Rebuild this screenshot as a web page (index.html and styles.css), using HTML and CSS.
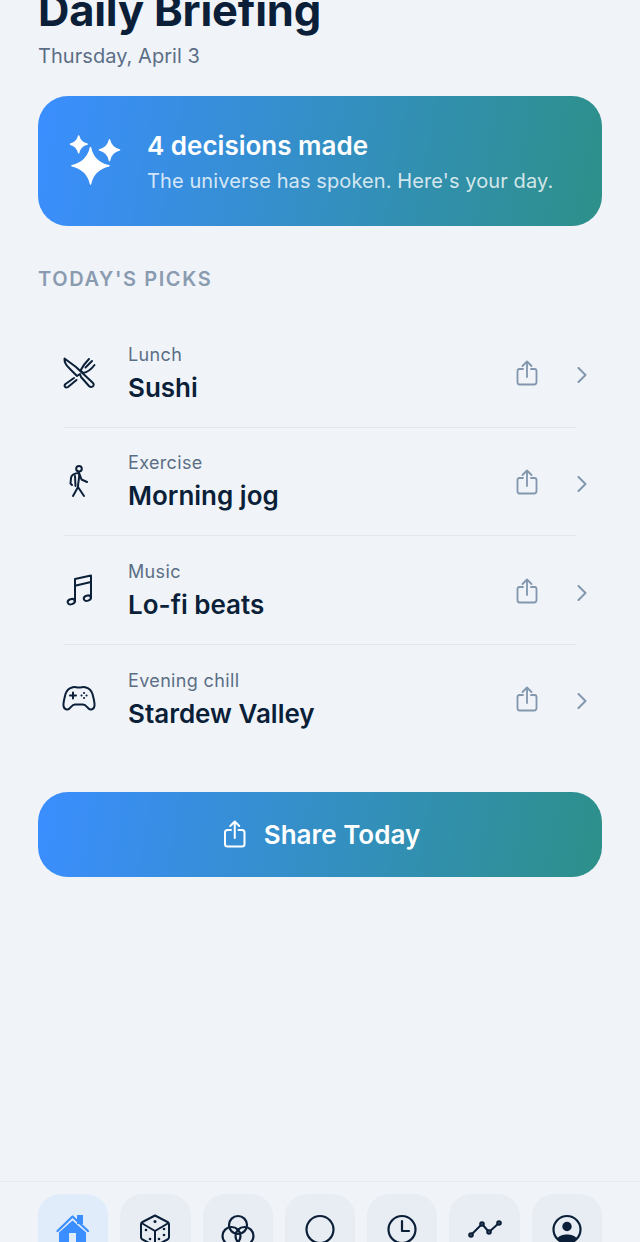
FILE: index.html
```html
<!DOCTYPE html>
<html lang="en">

<head>
    <meta charset="UTF-8">
    <meta name="viewport" content="width=device-width, initial-scale=1.0">
    <title>Daily Briefing</title>
    <link rel="stylesheet" href="styles.css">
</head>

<body>
    <div class="screen">
        <main class="content">
            <h1 class="title">Daily Briefing</h1>
            <p class="date">Thursday, April 3</p>

            <section class="hero">
                <svg class="hero-icon" viewBox="0 0 54 54" fill="#fff" stroke="#fff" stroke-width="1.500" stroke-linejoin="round">
                    <path d="M21.300 13 C23.500 24 30 29.500 40.500 32 C30 34.500 23.500 40 21.300 51 C19 40 12.500 34.500 2 32 C12.500 29.500 19 24 21.300 13 Z"/>
                    <path d="M9 1 C10 5 13 8.500 18 9.500 C13 10.500 10 14 9 18.500 C8 14 5 10.500 0 9.500 C5 8.500 8 5 9 1 Z"/>
                    <path d="M41 5 C42 10 46 14 51.500 15.500 C46 17 42 21 41 26.500 C40 21 36 17 30.500 15.500 C36 14 40 10 41 5 Z"/>
                </svg>
                <div class="hero-text">
                    <div class="hero-title">4 decisions made</div>
                    <div class="hero-sub">The universe has spoken. Here's your day.</div>
                </div>
            </section>

            <h2 class="section-label">TODAY'S PICKS</h2>

            <div class="picks">
                <div class="pick">
                    <svg class="pick-icon" viewBox="0 0 34 34" fill="none" stroke="#0b1f38" stroke-width="2" stroke-linecap="round" stroke-linejoin="round">
                        <path d="M2.500 2.500 C2 7 5 10 9 14 L15 20 L18 18 L19 21 L27 30 C28.500 31.500 31 31 31.500 29.500 C32 28.500 31.500 27.500 31 27 L14 11 Z"/>
                        <path d="M12 22 L3.500 28 C1.500 30 3.500 32.500 6 31 L14.500 24"/>
                        <path d="M21 17 L18.500 14.500 C20 11.500 22 8 27 3 M21 17 C24 16.500 28 15 32.500 9 M23.500 11.500 L30 5"/>
                    </svg>
                    <div class="pick-text">
                        <div class="pick-cat">Lunch</div>
                        <div class="pick-name">Sushi</div>
                    </div>
                    <svg class="share-icon" viewBox="0 0 22 26" fill="none" stroke="#8296ad" stroke-width="1.800" stroke-linecap="round" stroke-linejoin="round">
                        <path d="M7 9 H3.500 C2 9 1.500 10 1.500 11 V22 C1.500 23.500 2.500 24.500 3.500 24.500 H18 C19.500 24.500 20.500 23.500 20.500 22 V11 C20.500 10 19.500 9 18.500 9 H15"/>
                        <path d="M11 17 V1.500 M6.500 6 L11 1.500 L15.500 6"/>
                    </svg>
                    <svg class="chevron" viewBox="0 0 10 16" fill="none" stroke="#8296ad" stroke-width="2" stroke-linecap="round" stroke-linejoin="round"><path d="M1.500 1 L8.500 8 L1.500 15"/></svg>
                </div>
                <div class="pick">
                    <svg class="pick-icon" viewBox="0 0 34 34" fill="none" stroke="#0b1f38" stroke-width="2" stroke-linecap="round" stroke-linejoin="round">
                        <circle cx="17" cy="3.800" r="2.800"/>
                        <path d="M17 8 C13 8 9 10 9 13 L8.500 18.500 L10 20"/>
                        <path d="M17 8 C18 12 16 16 16 22 L11 31 M16 22 L22 31"/>
                        <path d="M17.500 9 L19.500 14.500 L25 17"/>
                        <path d="M13 11 L13.500 21"/>
                    </svg>
                    <div class="pick-text">
                        <div class="pick-cat">Exercise</div>
                        <div class="pick-name">Morning jog</div>
                    </div>
                    <svg class="share-icon" viewBox="0 0 22 26" fill="none" stroke="#8296ad" stroke-width="1.800" stroke-linecap="round" stroke-linejoin="round">
                        <path d="M7 9 H3.500 C2 9 1.500 10 1.500 11 V22 C1.500 23.500 2.500 24.500 3.500 24.500 H18 C19.500 24.500 20.500 23.500 20.500 22 V11 C20.500 10 19.500 9 18.500 9 H15"/>
                        <path d="M11 17 V1.500 M6.500 6 L11 1.500 L15.500 6"/>
                    </svg>
                    <svg class="chevron" viewBox="0 0 10 16" fill="none" stroke="#8296ad" stroke-width="2" stroke-linecap="round" stroke-linejoin="round"><path d="M1.500 1 L8.500 8 L1.500 15"/></svg>
                </div>
                <div class="pick">
                    <svg class="pick-icon" viewBox="0 0 34 34" fill="none" stroke="#0b1f38" stroke-width="2" stroke-linecap="round" stroke-linejoin="round">
                        <path d="M13 27.500 V5 L29 1.600 V24"/>
                        <path d="M13 11.700 L29 8"/>
                        <ellipse cx="9.200" cy="27.700" rx="3.600" ry="2.600" transform="rotate(-18 9.200 27.700)"/>
                        <ellipse cx="25.300" cy="24.200" rx="3.600" ry="2.600" transform="rotate(-18 25.300 24.200)"/>
                    </svg>
                    <div class="pick-text">
                        <div class="pick-cat">Music</div>
                        <div class="pick-name">Lo-fi beats</div>
                    </div>
                    <svg class="share-icon" viewBox="0 0 22 26" fill="none" stroke="#8296ad" stroke-width="1.800" stroke-linecap="round" stroke-linejoin="round">
                        <path d="M7 9 H3.500 C2 9 1.500 10 1.500 11 V22 C1.500 23.500 2.500 24.500 3.500 24.500 H18 C19.500 24.500 20.500 23.500 20.500 22 V11 C20.500 10 19.500 9 18.500 9 H15"/>
                        <path d="M11 17 V1.500 M6.500 6 L11 1.500 L15.500 6"/>
                    </svg>
                    <svg class="chevron" viewBox="0 0 10 16" fill="none" stroke="#8296ad" stroke-width="2" stroke-linecap="round" stroke-linejoin="round"><path d="M1.500 1 L8.500 8 L1.500 15"/></svg>
                </div>
                <div class="pick">
                    <svg class="pick-icon" viewBox="0 0 34 34" fill="none" stroke="#0b1f38" stroke-width="2" stroke-linecap="round" stroke-linejoin="round">
                        <path d="M10 5.500 C12 4.500 14 5.500 17 5.500 C20 5.500 22 4.500 24 5.500 C27.500 6.500 29.500 9 30.500 12 C31.500 16 33 21 32.500 24 C32 27.500 28.500 28.500 26.500 26.500 C24.500 24.500 23.500 22.500 21 22.500 H13 C10.500 22.500 9.500 24.500 7.500 26.500 C5.500 28.500 2 27.500 1.500 24 C1 21 2.500 16 3.500 12 C4.500 9 6.500 6.500 10 5.500 Z"/>
                        <path d="M11 10.500 V16.500 M8 13.500 H14"/>
                        <path d="M22 11 H22.100 M22 16 H22.100 M19.500 13.500 H19.600 M24.500 13.500 H24.600"/>
                    </svg>
                    <div class="pick-text">
                        <div class="pick-cat">Evening chill</div>
                        <div class="pick-name">Stardew Valley</div>
                    </div>
                    <svg class="share-icon" viewBox="0 0 22 26" fill="none" stroke="#8296ad" stroke-width="1.800" stroke-linecap="round" stroke-linejoin="round">
                        <path d="M7 9 H3.500 C2 9 1.500 10 1.500 11 V22 C1.500 23.500 2.500 24.500 3.500 24.500 H18 C19.500 24.500 20.500 23.500 20.500 22 V11 C20.500 10 19.500 9 18.500 9 H15"/>
                        <path d="M11 17 V1.500 M6.500 6 L11 1.500 L15.500 6"/>
                    </svg>
                    <svg class="chevron" viewBox="0 0 10 16" fill="none" stroke="#8296ad" stroke-width="2" stroke-linecap="round" stroke-linejoin="round"><path d="M1.500 1 L8.500 8 L1.500 15"/></svg>
                </div>
            </div>

            <button class="share-btn">
                <svg class="share-btn-icon" viewBox="0 0 28 28" fill="none" stroke="#fff" stroke-width="2" stroke-linecap="round" stroke-linejoin="round">
                    <g transform="translate(3.500 0)">
                        <path d="M7.500 10 H4 C2.500 10 1.500 11 1.500 12.500 V24 C1.500 25.500 2.500 26.500 4 26.500 H18.500 C20 26.500 21 25.500 21 24 V12.500 C21 11 20 10 18.500 10 H15"/>
                        <path d="M11.250 18 V1.500 M6.750 6 L11.250 1.500 L15.750 6"/>
                    </g>
                </svg>
                Share Today
            </button>
        </main>

        <nav class="tabbar">
            <div class="tab active">
                <svg viewBox="0 0 34 34" fill="#3b8eff" stroke="none">
                    <rect x="21" y="1" width="6" height="9"/>
                    <path d="M16.500 6.500 L30 18.500 V34 H20 V19 H13 V34 H3 V18.500 Z"/>
                    <path d="M1.500 17 L16.500 2.500 L32 17" fill="none" stroke="#3b8eff" stroke-width="2.200" stroke-linecap="round" stroke-linejoin="round"/>
                </svg>
            </div>
            <div class="tab">
                <svg viewBox="0 0 34 34" fill="none" stroke="#0b1f38" stroke-width="2" stroke-linejoin="round">
                    <path d="M17 1.500 L29.500 8 C30.500 8.500 31 9.500 31 10.500 V23 C31 24 30.500 25 29.500 25.500 L17 32 L4.500 25.500 C3.500 25 3 24 3 23 V10.500 C3 9.500 3.500 8.500 4.500 8 Z"/>
                    <path d="M3.500 9 L17 17 L30.500 9 M17 17 V32"/>
                    <g fill="#0b1f38" stroke="none">
                        <circle cx="17" cy="7.500" r="1.500"/>
                        <circle cx="8" cy="16" r="1.300"/>
                        <circle cx="12" cy="25" r="1.300"/>
                        <circle cx="26" cy="15" r="1.300"/>
                        <circle cx="26" cy="21" r="1.300"/>
                        <circle cx="21" cy="25" r="1.300"/>
                    </g>
                </svg>
            </div>
            <div class="tab">
                <svg viewBox="0 0 34 34" fill="none" stroke="#0b1f38" stroke-width="2.200">
                    <circle cx="17" cy="11" r="9"/>
                    <circle cx="10.500" cy="22" r="9"/>
                    <circle cx="23.500" cy="22" r="9"/>
                </svg>
            </div>
            <div class="tab">
                <svg viewBox="0 0 34 34" fill="none" stroke="#0b1f38" stroke-width="2.200">
                    <circle cx="17" cy="15.500" r="13.500"/>
                </svg>
            </div>
            <div class="tab">
                <svg viewBox="0 0 34 34" fill="none" stroke="#0b1f38" stroke-width="2.200" stroke-linecap="round" stroke-linejoin="round">
                    <circle cx="17" cy="15.500" r="13.500"/>
                    <path d="M17 7 V17 H24"/>
                </svg>
            </div>
            <div class="tab">
                <svg viewBox="0 0 34 34" fill="none" stroke="#0b1f38" stroke-width="2" stroke-linecap="round" stroke-linejoin="round">
                    <path d="M3 21 L14 10 L21 18 L31 9"/>
                    <circle cx="3" cy="21" r="1.800" fill="#5a6a7e"/>
                    <circle cx="14" cy="10" r="1.800" fill="#5a6a7e"/>
                    <circle cx="21" cy="18" r="1.800" fill="#5a6a7e"/>
                    <circle cx="31" cy="9" r="1.800" fill="#5a6a7e"/>
                </svg>
            </div>
            <div class="tab">
                <svg viewBox="0 0 34 34" fill="none" stroke="#0b1f38" stroke-width="2.200">
                    <circle cx="17" cy="15.500" r="13.500"/>
                    <circle cx="17" cy="12.500" r="4.700" fill="#0b1f38" stroke="none"/>
                    <path d="M7 25 C9 21.500 13 20.500 17 20.500 C21 20.500 25 21.500 27 25 C24 28.500 20.500 29.500 17 29.500 C13.500 29.500 10 28.500 7 25 Z" fill="#0b1f38" stroke="none"/>
                </svg>
            </div>
        </nav>
    </div>
</body>

</html>
```

FILE: styles.css
```css
* {
    box-sizing: border-box;
}

html,
body {
    margin: 0;
    height: 100%;
    overflow: hidden;
}

body {
    background-color: #f0f4f9;
    font-family: Inter, "Liberation Sans", sans-serif;
    color: #0b1f38;
}

.screen {
    display: flex;
    flex-direction: column;
    height: 1242px;
    overflow: hidden;
}

.content {
    flex: 1;
    padding: 0 38px;
}

.title {
    margin: -15px 0 0;
    font-size: 43.500px;
    line-height: 50px;
    font-weight: 700;
    letter-spacing: -0.2px;
}

.date {
    margin: 9px 0 0;
    font-size: 20px;
    line-height: 24px;
    letter-spacing: 0.05px;
    color: #5b6e85;
}

.hero {
    display: flex;
    align-items: center;
    gap: 25px;
    height: 130px;
    margin-top: 28px;
    padding: 0 32px;
    border-radius: 30px;
    background: linear-gradient(100deg, #3b8eff, #2d9089);
    color: #fff;
}

.hero-icon {
    width: 52px;
    height: 52px;
    flex-shrink: 0;
}

.hero-title {
    font-size: 26px;
    line-height: 32px;
    font-weight: 600;
}

.hero-sub {
    margin-top: 7px;
    font-size: 20px;
    line-height: 24px;
    letter-spacing: 0.1px;
    color: rgba(255, 255, 255, 0.8);
}

.section-label {
    margin: 41px 0 0;
    font-size: 20px;
    line-height: 24px;
    font-weight: 600;
    letter-spacing: 1.6px;
    color: #8a9bb0;
}

.picks {
    margin-top: 27px;
}

.pick {
    position: relative;
    display: flex;
    align-items: center;
    height: 108.670px;
    padding: 0 15px 0 24px;
}

.pick + .pick::before {
    content: "";
    position: absolute;
    top: 0;
    left: 26px;
    right: 26px;
    height: 1px;
    background: #e3e8ef;
}

.pick-icon {
    width: 34px;
    height: 34px;
    margin-top: 2px;
    flex-shrink: 0;
}

.pick-text {
    flex: 1;
    margin-left: 32px;
    padding-top: 3px;
}

.pick-cat {
    font-size: 18px;
    line-height: 22px;
    letter-spacing: 0.35px;
    color: #5b6e85;
}

.pick-name {
    margin-top: 6px;
    font-size: 26px;
    line-height: 32px;
    font-weight: 600;
}

.share-icon {
    width: 22px;
    height: 26px;
    margin-top: 2px;
    margin-right: 39px;
}

.chevron {
    width: 10px;
    height: 16px;
    margin-top: 6px;
}

.share-btn {
    display: flex;
    align-items: center;
    justify-content: center;
    gap: 16px;
    width: 100%;
    height: 85px;
    margin-top: 39px;
    border: none;
    border-radius: 30px;
    background: linear-gradient(100deg, #3b8eff, #2d9089);
    color: #fff;
    font-family: inherit;
    font-size: 26px;
    font-weight: 600;
}

.share-btn-icon {
    width: 28px;
    height: 28px;
}

.tabbar {
    display: flex;
    gap: 12px;
    height: 61px;
    padding: 12px 38px 0;
    border-top: 1px solid #e6ebf1;
    overflow: hidden;
}

.tab {
    display: flex;
    justify-content: center;
    flex: 1;
    height: 80px;
    padding-top: 20px;
    border-radius: 22px;
    background: #e8edf4;
}

.tab svg {
    width: 34px;
    height: 34px;
}

.tab.active {
    background: #e0ecfa;
}
```
